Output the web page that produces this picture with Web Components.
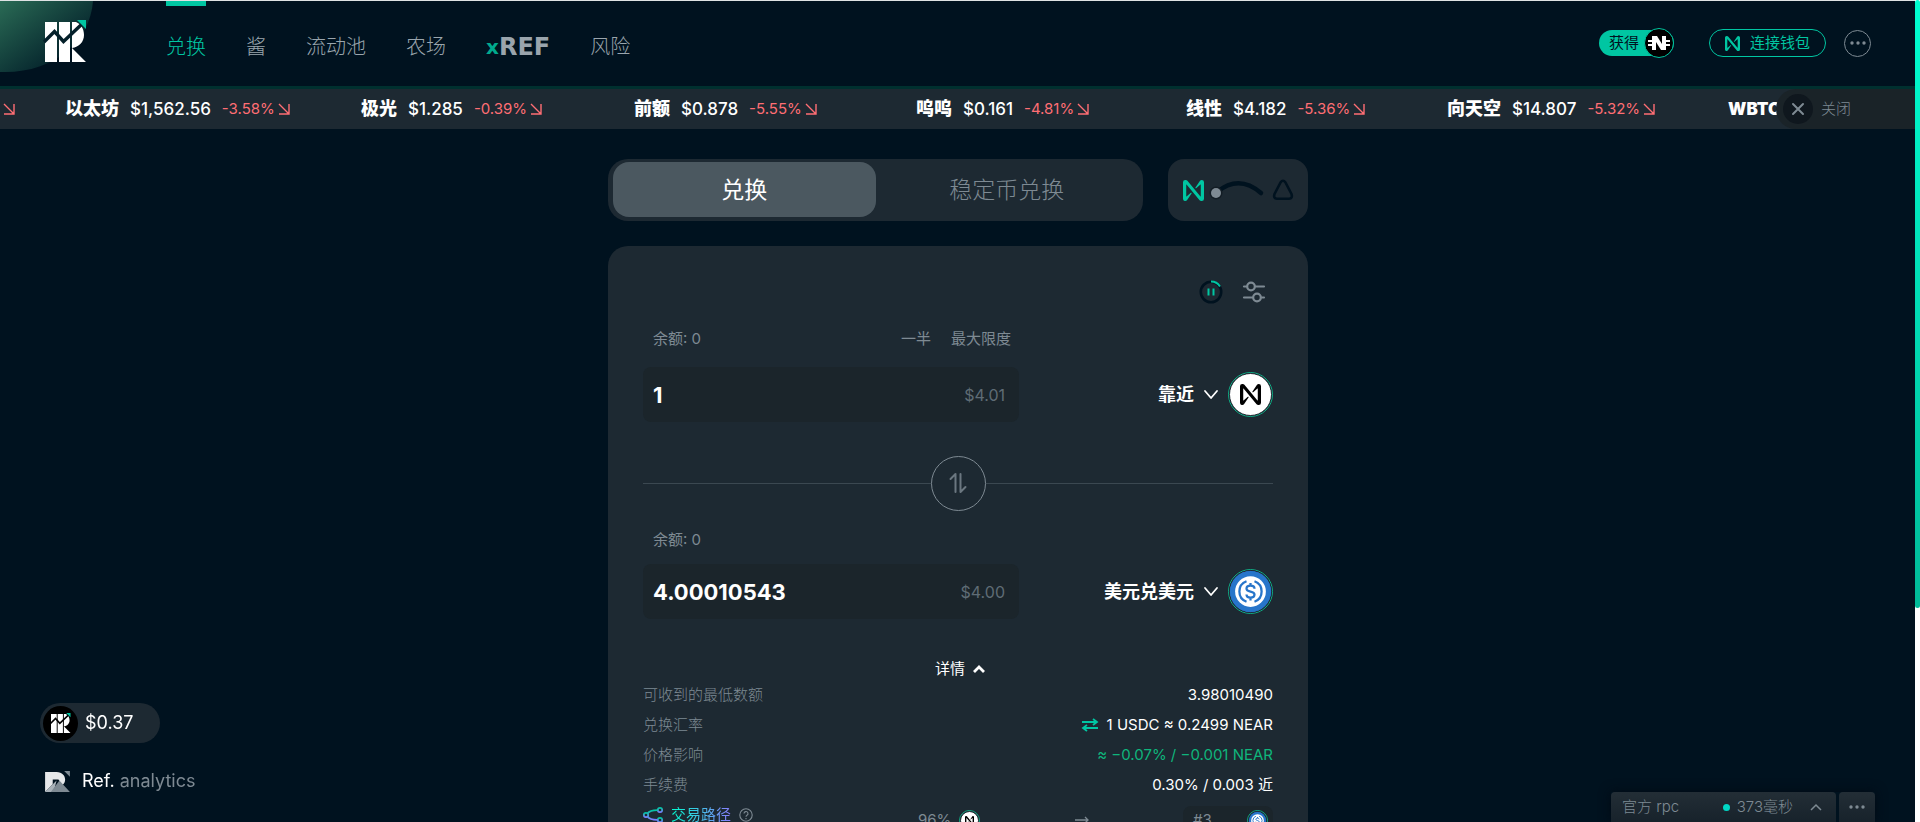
<!DOCTYPE html>
<html lang="zh-CN">
<head>
<meta charset="utf-8">
<meta name="viewport" content="width=device-width, initial-scale=1">
<title>Ref Finance</title>
<style>
:root {
  --bg: #00121f;
  --panel: #1d2932;
  --field: #1b252b;
  --teal: #00c6a2;
  --muted: #7e8a93;
  --down: #ff6e74;
}
html, body { margin: 0; height: 100%; overflow: hidden; }
body {
  background: var(--bg);
  color: #fff;
  font-family: Inter, "Noto Sans CJK SC", sans-serif;
  font-size: 15px;
  line-height: 20px;
}
</style>
</head>
<body>
<ref-app></ref-app>

<script>
const NEAR = 'M21.443 0c-.89 0-1.714.46-2.18 1.218l-5.017 7.448a.533.533 0 0 0 .792.7l4.938-4.282a.2.2 0 0 1 .334.151v13.41a.2.2 0 0 1-.354.128L5.03.905A2.555 2.555 0 0 0 3.078 0h-.521A2.557 2.557 0 0 0 0 2.557v18.886a2.557 2.557 0 0 0 4.736 1.338l5.017-7.448a.533.533 0 0 0-.792-.7l-4.938 4.283a.2.2 0 0 1-.333-.152V5.352a.2.2 0 0 1 .354-.128l14.924 17.87c.486.574 1.2.905 1.952.906h.521A2.558 2.558 0 0 0 24 21.445V2.557A2.558 2.558 0 0 0 21.443 0Z';

const ICONS = {
  near: [24, 24, `<path fill="currentColor" d="${NEAR}"/>`],
  logo: [42, 42, `<g fill="#fff"><path d="M0 2h12v40H0zM14 2h11v40H14zM27 2h4c5 2 8 7 8 13 0 7-5 12-12 13l14 14H27z"/></g>
    <path fill="none" stroke="var(--cut, #04202a)" stroke-width="3.400" d="M-1 22 9.500 11.500 18.500 21.500 37 4"/><path fill="#00c6a2" d="M32 0h9v9z"/>`],
  mark: [26, 22, `<path fill="#e6e8ea" d="M0 1h12c6 0 9 4 9 8 0 3-1 4-3 6l-4-6H8v5l-8 8z"/><path fill="#a9b2b9" d="M0 22 12 10l-3 12z"/><path fill="#7e8a93" d="M6 22 15 10l11 12zM20 0h6v6z"/>`],
  dots: [16, 4, `<g fill="currentColor"><circle cx="2" cy="2" r="1.700"/><circle cx="8" cy="2" r="1.700"/><circle cx="14" cy="2" r="1.700"/></g>`],
  fall: [12, 12, `<path fill="none" stroke="currentColor" stroke-width="1.400" d="M1 1l10 10M11 1v10H1"/>`],
  close: [14, 14, `<path fill="none" stroke="currentColor" stroke-width="2" stroke-linecap="round" d="M2 2l10 10M12 2 2 12"/>`],
  naira: [22, 18, `<g fill="#fff"><path d="M4 2h5l5 8V2h4v14h-5L8 8v8H4z"/><path d="M0 6h7v2H0zM0 10h7v2H0zM15 6h7v2h-7zM15 10h7v2h-7z"/></g>`],
  arc: [54, 18, `<path fill="none" stroke="#00121f" stroke-width="4.500" stroke-linecap="round" d="M6 11Q28-7 50 12"/><circle cx="5" cy="12" r="6.500" fill="#131d25"/><circle cx="5" cy="12" r="5" fill="#7e8a93"/>`],
  aurora: [22, 22, `<path fill="none" stroke="#00121f" stroke-width="2.600" stroke-linejoin="round" d="M8.500 3.500Q11 0 13.500 3.500L19.500 15Q21 19.500 17 19.700H5Q1 19.500 2.500 15Z"/>`],
  pause: [24, 24, `<circle cx="12" cy="12" r="10.200" fill="none" stroke="#00121f" stroke-width="2.600"/><path fill="none" stroke="#00c6a2" stroke-width="2" d="M12 1.500A10.500 10.500 0 0 1 21 6.500M9.500 8.500v7M14.500 8.500v7"/>`],
  tune: [22, 22, `<g fill="none" stroke="currentColor" stroke-width="2.200" stroke-linecap="round"><path d="M1 5.500h3M12 5.500h9M1 16.500h9M18 16.500h3"/><circle cx="8" cy="5.500" r="3.800"/><circle cx="14" cy="16.500" r="3.800"/></g>`],
  down: [14, 10, `<path fill="none" stroke="currentColor" stroke-width="1.800" stroke-linecap="round" stroke-linejoin="round" d="M1 1l6 7 6-7"/>`],
  up: [14, 10, `<path fill="none" stroke="currentColor" stroke-width="var(--w, 2.800)" d="M2 8l5-5 5 5"/>`],
  flip: [18, 22, `<path fill="none" stroke="currentColor" stroke-width="2" stroke-linecap="round" stroke-linejoin="round" d="M1.500 7 6.500 2v18M11.500 2v18l5-5"/>`],
  rate: [16, 12, `<path fill="none" stroke="#00c6a2" stroke-width="1.800" d="M0 3h14M11 0l4 3-4 3M16 9H2M5 6 1 9l4 3"/>`],
  arrow: [14, 8, `<path fill="none" stroke="currentColor" stroke-width="1.300" d="M0 4h13M10 1l3 3-3 3"/>`],
  route: [20, 16, `<defs><linearGradient id="g" x2="0" y2="1"><stop stop-color="#00c6a2"/><stop offset="1" stop-color="#7d7cff"/></linearGradient></defs><g fill="none" stroke="url(#g)" stroke-width="1.700"><circle cx="3" cy="8" r="2.200"/><circle cx="17" cy="3" r="2.200"/><circle cx="17" cy="13" r="2.200"/><path d="M4.500 6.500Q7 3 14.500 3.100M4.500 9.500Q7 13 14.500 12.900"/></g>`],
  help: [14, 14, `<g fill="none" stroke="currentColor" stroke-width="1.100"><circle cx="7" cy="7" r="6.200"/><path d="M5 5.600a2 2 0 1 1 3 1.700c-.8.500-1 .8-1 1.500M7 10v1.200"/></g>`],
  usdc: [36, 36, `<circle cx="18" cy="18" r="18" fill="#2775ca"/><circle cx="18" cy="18" r="13.500" fill="#fff"/>
    <g fill="none" stroke="#2775ca" stroke-width="2"><path d="M14.500 9A9.600 9.600 0 0 0 14.500 27M21.500 9A9.600 9.600 0 0 1 21.500 27"/><path d="M21.500 15.500c0-3.600-7-3.600-7 0 0 3.500 7 1.700 7 5.200 0 3.600-7 3.600-7 0M18 10.500v2.500M18 23.300v2.500"/></g>`]
};

const define = (name, css, html) => {
  const tpl = document.createElement('template');
  tpl.innerHTML = `<style>
    *{box-sizing:border-box}
    button,input{font:inherit;color:inherit;background:none;border:0;margin:0;padding:0}
    button{cursor:pointer} a{color:inherit;text-decoration:none}
    ${css}</style>${html}`;
  customElements.define(name, class extends HTMLElement {
    constructor() {
      super();
      this.attachShadow({ mode: 'open' }).append(tpl.content.cloneNode(true));
    }
  });
};

/* <ref-icon name size>: inline SVG, size is the drawn width */
customElements.define('ref-icon', class extends HTMLElement {
  constructor() { super(); this.attachShadow({ mode: 'open' }); }
  connectedCallback() {
    const [w, h, body] = ICONS[this.getAttribute('name')];
    const width = Number(this.getAttribute('size') || w);
    this.shadowRoot.innerHTML = `<style>:host{display:inline-flex;flex:none}svg{display:block;overflow:visible}</style>
      <svg aria-hidden="true" width="${width}" height="${Math.round(width * h / w)}" viewBox="0 0 ${w} ${h}">${body}</svg>`;
  }
});

define('nav-link', `
  :host{display:block;color:#9aa5ad;font-size:20px;font-weight:300;line-height:24px}
  a{display:flex;align-items:center;height:85px;padding-bottom:10px;padding-top:12px;border-top:5px solid transparent}
  :host([current]) a{color:var(--teal);border-color:var(--teal)}`,
  `<a href="#"><slot></slot></a>`);

define('ref-header', `
  :host{display:block;position:relative;border-top:1px solid #dfe3e4}
  .glow{position:absolute;left:0;top:0}
  header{position:relative;display:flex;align-items:flex-start;height:85px;padding:0 45px 0 45px}
  .logo{margin-top:19px;margin-right:79px;display:block}
  nav{display:flex;gap:40px;flex:1}
  .x{color:#00a98d;font:700 20px/24px "DejaVu Sans",sans-serif}
  .ref{color:#9aa5ad;font:700 24px/24px "DejaVu Sans",sans-serif}
  .tools{display:flex;align-items:center;margin-top:28px}
  .earn{display:flex;align-items:center;height:26px;border-radius:13px;background:var(--teal);color:#00121f;padding-left:10px;gap:5px;margin-right:35px;font-weight:400}
  .coin{width:30px;height:30px;border-radius:50%;background:#000;border:1px solid var(--teal);display:grid;place-items:center}
  .wallet{display:flex;align-items:center;gap:10px;height:28px;border:1px solid var(--teal);border-radius:14px;padding:0 15px;color:var(--teal);margin-right:18px;font-weight:400}
  .more{width:27px;height:27px;border:1px solid var(--muted);border-radius:50%;color:var(--muted);display:grid;place-items:center}`,
  `<svg class="glow" width="96" height="74" aria-hidden="true"><defs><linearGradient id="a" x1="0" y1="0" x2="1" y2="1"><stop stop-color="#2a6b55"/><stop offset=".78" stop-color="#03202a"/></linearGradient></defs><path fill="url(#a)" d="M0 0h93C90 40 55 71 5 71H0z"/></svg>
  <header>
    <a class="logo" href="#" aria-label="Ref Finance"><ref-icon name="logo"></ref-icon></a>
    <nav>
      <nav-link current>兑换</nav-link><nav-link>酱</nav-link><nav-link>流动池</nav-link><nav-link>农场</nav-link>
      <nav-link><span class="x">x</span><span class="ref">REF</span></nav-link><nav-link>风险</nav-link>
    </nav>
    <div class="tools">
      <button class="earn">获得<span class="coin"><ref-icon name="naira"></ref-icon></span></button>
      <button class="wallet"><ref-icon name="near" size="15"></ref-icon>连接钱包</button>
      <button class="more" aria-label="更多"><ref-icon name="dots"></ref-icon></button>
    </div>
  </header>`);

define('ticker-item', `
  :host{display:flex;align-items:center;gap:11px;white-space:nowrap;font-size:17px}
  .name{font-size:18px;font-weight:700} .price{font-weight:500}
  .pct{display:flex;align-items:center;gap:3px;color:var(--down);font-size:15px}
  :host([plain]) .pct{display:none}
  :host([plain]) .name{font-size:17px}`,
  `<slot class="name" name="name"></slot><slot class="price" name="price"></slot>
   <span class="pct"><slot></slot><ref-icon name="fall"></ref-icon></span>`);

define('price-ticker', `
  :host{display:block;position:relative;border-top:3px solid #00302f;background:var(--panel);overflow:hidden}
  .track{display:grid;grid-template-columns:62px 296px 273px 282px 270px 261px 281px 80px;height:40px;padding-left:3px;align-items:center}
  .first{color:var(--down);display:flex}
  .close{position:absolute;right:0;top:0;display:flex;align-items:center;gap:8px;width:140px;height:40px;padding-left:7px;border-radius:20px 0 0 20px;background:#1a2328;color:var(--muted);font-weight:300}
  .x{width:30px;height:30px;border-radius:50%;background:#0f171e;display:grid;place-items:center}`,
  `<div class="track">
    <span class="first"><ref-icon name="fall"></ref-icon></span>
    <ticker-item><b slot="name">以太坊</b><span slot="price">$1,562.56</span>-3.58%</ticker-item>
    <ticker-item><b slot="name">极光</b><span slot="price">$1.285</span>-0.39%</ticker-item>
    <ticker-item><b slot="name">前额</b><span slot="price">$0.878</span>-5.55%</ticker-item>
    <ticker-item><b slot="name">呜呜</b><span slot="price">$0.161</span>-4.81%</ticker-item>
    <ticker-item><b slot="name">线性</b><span slot="price">$4.182</span>-5.36%</ticker-item>
    <ticker-item><b slot="name">向天空</b><span slot="price">$14.807</span>-5.32%</ticker-item>
    <ticker-item plain><b slot="name">WBTC</b></ticker-item>
  </div>
  <button class="close"><span class="x"><ref-icon name="close"></ref-icon></span>关闭</button>`);

define('swap-tabs', `
  :host{display:flex;flex:1;padding:3px 5px 4px;height:62px;border-radius:20px;background:var(--panel)}
  button{flex:1;border-radius:16px;font-size:23px;color:var(--muted);font-weight:300}
  .on{background:#4b5860;color:#fff;font-weight:400}`,
  `<button class="on">兑换</button><button>稳定币兑换</button>`);

define('chain-switch', `
  :host{display:flex}
  button{display:flex;align-items:center;justify-content:center;gap:7px;width:140px;height:62px;border-radius:16px;background:var(--panel);color:var(--teal)}`,
  `<button aria-label="切换网络"><ref-icon name="near" size="21"></ref-icon><ref-icon name="arc"></ref-icon><ref-icon name="aurora"></ref-icon></button>`);

define('token-coin', `
  :host{display:grid;place-items:center;flex:none;width:45px;height:45px;border-radius:50%;border:1px solid #0fae86}
  span{display:grid;place-items:center;width:100%;height:100%;border-radius:50%;border:1px solid var(--panel);background:var(--fill,#fff);color:#000}`,
  `<span><slot></slot></span>`);

define('token-field', `
  :host{display:block}
  .top,.row{display:grid;grid-template-columns:minmax(0,376fr) minmax(0,254fr)}
  .top{color:var(--muted);margin-bottom:var(--gap,14px)}
  .bal{display:flex;gap:20px;padding:0 8px 0 10px}
  .bal slot:first-child{flex:1;display:block}
  .row{align-items:center}
  .box{display:flex;align-items:center;height:55px;padding:0 14px 0 10px;border-radius:8px;background:var(--field);font-size:16px;color:#5f6c75}
  .pick{display:flex;align-items:center;justify-content:flex-end;gap:10px;font-size:18px;font-weight:700}`,
  `<div class="top"><div class="bal"><slot name="balance"></slot><slot name="max"></slot></div></div>
   <div class="row"><div class="box"><slot name="amount"></slot><slot name="usd"></slot></div>
   <button class="pick"><slot name="token"></slot><ref-icon name="down"></ref-icon><slot name="coin"></slot></button></div>`);

define('detail-row', `
  :host{display:flex;align-items:center;justify-content:space-between;height:30px;font-weight:400}
  .k{color:var(--muted);font-weight:300;display:block} .v{display:flex;align-items:center;gap:9px}`,
  `<slot class="k" name="label"></slot><span class="v"><slot></slot></span>`);

define('swap-card', `
  :host{display:block;border-radius:20px 20px 0 0;background:var(--panel);padding:34px 35px 0;height:620px}
  .bar{display:flex;justify-content:flex-end;align-items:center;gap:20px;height:24px;margin-bottom:25px;padding-right:8px;color:var(--muted)}
  .bar button{display:flex}
  .pay{--gap:18px}
  .mini{display:flex;gap:20px}
  input{flex:1;min-width:0;width:0;font-size:22px;font-weight:700;color:#fff;outline:0}
  .split{display:flex;align-items:center;height:54px;margin:34px 0 20px;color:#6b7780}
  .split::before,.split::after{content:"";flex:1;height:1px;background:#3b4851}
  .split button{width:55px;height:55px;border:1px solid var(--muted);border-radius:50%;display:grid;place-items:center}
  .usdc{--fill:#2775ca}
  .toggle{display:flex;align-items:center;gap:7px;margin:38px auto 0;height:23px;padding-left:5px}
  .good{color:#0fb57c}
  .route{display:grid;grid-template-columns:minmax(0,275fr) minmax(0,355fr);align-items:start;color:var(--muted)}
  .path{display:flex;align-items:center;gap:8px;height:30px;font-weight:300}
  .path b{font-weight:400;background:linear-gradient(90deg,#00ffd1,#8a7cff);background-clip:text;-webkit-background-clip:text;color:transparent}
  .hops{display:flex;align-items:center;justify-content:space-between;padding-top:6px}
  .hop{display:flex;align-items:center;gap:8px}
  .end{display:flex;align-items:center;justify-content:space-between;width:90px;height:28px;padding:0 5px 0 10px;border-radius:8px;background:var(--field)}
  .s{width:21px;height:21px}`,
  `<div class="bar"><button aria-label="暂停刷新"><ref-icon name="pause"></ref-icon></button><button aria-label="设置"><ref-icon name="tune"></ref-icon></button></div>
  <token-field class="pay">
    <span slot="balance">余额: 0</span><span slot="max" class="mini"><button>一半</button><button>最大限度</button></span>
    <input slot="amount" value="1" aria-label="支付数量"><span slot="usd">$4.01</span>
    <span slot="token">靠近</span><token-coin slot="coin"><ref-icon name="near" size="21"></ref-icon></token-coin>
  </token-field>
  <div class="split"><button aria-label="交换方向"><ref-icon name="flip"></ref-icon></button></div>
  <token-field>
    <span slot="balance">余额: 0</span>
    <input slot="amount" value="4.00010543" aria-label="收到数量"><span slot="usd">$4.00</span>
    <span slot="token">美元兑美元</span><token-coin slot="coin" class="usdc"><ref-icon name="usdc" size="41"></ref-icon></token-coin>
  </token-field>
  <button class="toggle">详情<ref-icon name="up"></ref-icon></button>
  <detail-row><span slot="label">可收到的最低数额</span>3.98010490</detail-row>
  <detail-row><span slot="label">兑换汇率</span><ref-icon name="rate"></ref-icon><span>1 USDC ≈ 0.2499 NEAR</span></detail-row>
  <detail-row class="good"><span slot="label">价格影响</span>≈ −0.07% / −0.001 NEAR</detail-row>
  <detail-row><span slot="label">手续费</span>0.30% / 0.003 近</detail-row>
  <div class="route">
    <div class="path"><ref-icon name="route"></ref-icon><b>交易路径</b><ref-icon name="help"></ref-icon></div>
    <div class="hops"><span class="hop">96%<token-coin class="s"><ref-icon name="near" size="9"></ref-icon></token-coin></span><ref-icon name="arrow"></ref-icon>
      <span class="end">#3<token-coin class="s usdc"><ref-icon name="usdc" size="17"></ref-icon></token-coin></span></div>
  </div>`);

define('ref-price', `
  :host{position:fixed;left:40px;bottom:31px;display:flex;flex-direction:column;gap:28px;font-size:18px}
  .pill{display:flex;align-items:center;gap:7px;width:120px;height:40px;padding-left:3px;border-radius:20px;background:var(--panel)}
  .disc{--cut:#000;width:35px;height:35px;border-radius:50%;background:#000;display:grid;place-items:center}
  .an{display:flex;align-items:center;gap:12px;padding-left:5px;height:20px;color:var(--muted)}
  em{font-style:normal;color:#fff}`,
  `<a class="pill" href="#"><span class="disc"><ref-icon name="logo" size="20"></ref-icon></span>$0.37</a>
   <a class="an" href="#"><ref-icon name="mark" size="25"></ref-icon><span><em>Ref.</em> analytics</span></a>`);

define('rpc-bar', `
  :host{position:fixed;right:45px;bottom:0;display:flex;gap:3px;color:var(--muted);box-shadow:0 0 12px #000a14}
  button{display:flex;align-items:center;height:30px;border-radius:4px 4px 0 0;background:linear-gradient(#232e36,#17222b)}
  .rpc{width:225px;padding:0 13px 0 11px;--w:1.500;font-weight:300}
  .n{flex:1;text-align:left}
  i{width:7px;height:7px;border-radius:50%;background:#00d6c4;margin-right:7px}
  .t{margin-right:16px} .m{width:36px;justify-content:center}`,
  `<button class="rpc"><span class="n">官方 rpc</span><i></i><span class="t">373毫秒</span><ref-icon name="up"></ref-icon></button>
   <button class="m" aria-label="更多"><ref-icon name="dots"></ref-icon></button>`);

define('scroll-rail', `
  :host{position:fixed;right:0;top:0;bottom:0;width:5px;background:#fff}
  div{height:74%;border-radius:3px;background:linear-gradient(#00ffd1,#00ba98)}`,
  `<div></div>`);

define('ref-app', `
  :host{display:block;height:100vh;overflow:hidden;padding-right:4px}
  main{width:700px;max-width:100%;margin:0 auto;padding-top:30px}
  .tabs{display:flex;gap:25px;margin-bottom:25px}`,
  `<ref-header></ref-header><price-ticker></price-ticker>
   <main><div class="tabs"><swap-tabs></swap-tabs><chain-switch></chain-switch></div><swap-card></swap-card></main>
   <ref-price></ref-price><rpc-bar></rpc-bar><scroll-rail></scroll-rail>`);
</script>
</body>
</html>
